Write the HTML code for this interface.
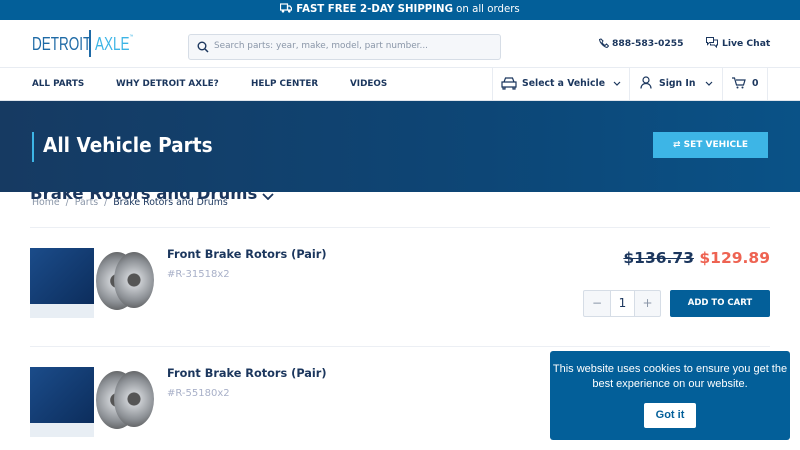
<!DOCTYPE html>
<html><head><style>
*{margin:0;padding:0;box-sizing:border-box}
body{width:800px;height:450px;overflow:hidden;font-family:"DejaVu Sans","Liberation Sans",sans-serif;background:#fff;position:relative;color:#1b365d}
.a{position:absolute}
.top{left:0;top:0;width:800px;height:20px;background:#035f99;color:#fff;font-size:10.2px;text-align:center;line-height:20px}
.nav{font-size:8.8px;font-weight:bold;color:#1b365d}
.hero{left:0;top:101px;width:800px;height:91px;background:linear-gradient(90deg,#163a62,#0d4676 60%,#0a5287)}
.btn{background:#035f99;color:#fff;font-size:8.5px;font-weight:bold;text-align:center;border-radius:2px}
</style></head><body>
<div class="a top"><svg width="12" height="10" viewBox="0 0 12 10" style="vertical-align:-1px;margin-right:4px"><rect x="0.5" y="1" width="7" height="6" fill="none" stroke="#fff" stroke-width="1.2"/><path d="M7.5 3h2.5l1.5 2v2h-4z" fill="none" stroke="#fff" stroke-width="1.2"/><circle cx="3" cy="8.3" r="1.3" fill="#fff"/><circle cx="9.3" cy="8.3" r="1.3" fill="#fff"/></svg><b>FAST FREE 2-DAY SHIPPING</b> on all orders</div>
<div class="a" style="left:32px;top:34px;font-family:'Liberation Sans',sans-serif;font-size:18px;color:#1e6aa6;transform:scaleX(0.75);transform-origin:left">DETROIT</div>
<div class="a" style="left:89px;top:30px;width:2px;height:27px;background:#1e6aa6"></div>
<div class="a" style="left:95px;top:34px;font-family:'Liberation Sans',sans-serif;font-size:18px;color:#3db5e6;transform:scaleX(0.75);transform-origin:left">AXLE<span style="font-size:5px;vertical-align:top">™</span></div>
<div class="a" style="left:188px;top:34px;width:313px;height:26px;border:1px solid #d6dde6;border-radius:3px;background:#f5f7fa"></div>
<svg class="a" style="left:197px;top:41px" width="12" height="12" viewBox="0 0 12 12"><circle cx="5" cy="5" r="3.8" fill="none" stroke="#1b365d" stroke-width="1.4"/><path d="M8 8l3 3" stroke="#1b365d" stroke-width="1.5"/></svg>
<div class="a" style="left:214px;top:41px;font-size:8.9px;color:#8a96a8">Search parts: year, make, model, part number...</div>
<svg class="a" style="left:599px;top:38px" width="10" height="10" viewBox="0 0 10 10"><path d="M2 1l2 2-1 1.5c.8 1.5 1.5 2.2 3 3L7.5 6l2 2-1.5 1.5C5 9 1 5 .5 1.5z" fill="none" stroke="#1b365d" stroke-width="1"/></svg>
<div class="a nav" style="left:612px;top:38px;font-size:9.2px">888-583-0255</div>
<svg class="a" style="left:706px;top:37px" width="12" height="11" viewBox="0 0 12 11"><path d="M.5.5h7v5h-4l-2 2v-2h-1zM8 3h3.5v5h-1v2l-2-2h-4V6.5" fill="none" stroke="#1b365d" stroke-width="1"/></svg>
<div class="a nav" style="left:722px;top:38px;font-size:9.2px">Live Chat</div>
<div class="a" style="left:0;top:67px;width:800px;height:1px;background:#e8ecf2"></div>
<div class="a" style="left:0;top:100px;width:800px;height:1px;background:#e0e5ec"></div>
<div class="a nav" style="left:32px;top:79px">ALL PARTS</div>
<div class="a nav" style="left:116px;top:79px">WHY DETROIT AXLE?</div>
<div class="a nav" style="left:251px;top:79px">HELP CENTER</div>
<div class="a nav" style="left:350px;top:79px">VIDEOS</div>
<div class="a" style="left:492px;top:68px;width:1px;height:32px;background:#e8ecf2"></div>
<div class="a" style="left:629px;top:68px;width:1px;height:32px;background:#e8ecf2"></div>
<div class="a" style="left:722px;top:68px;width:1px;height:32px;background:#e8ecf2"></div>
<div class="a" style="left:767px;top:68px;width:1px;height:32px;background:#e8ecf2"></div>
<svg class="a" style="left:501px;top:77px" width="16" height="13" viewBox="0 0 16 13"><path d="M3 5l1.5-4h7L13 5M1 5h14v5H1zM2 10v2h2v-2M12 10v2h2v-2" fill="none" stroke="#1b365d" stroke-width="1.2"/></svg>
<div class="a nav" style="left:522px;top:78px;font-size:9.3px">Select a Vehicle</div>
<svg class="a" style="left:613px;top:81px" width="8" height="5" viewBox="0 0 8 5"><path d="M1 1l3 3 3-3" fill="none" stroke="#1b365d" stroke-width="1.2"/></svg>
<svg class="a" style="left:640px;top:76px" width="12" height="13" viewBox="0 0 12 13"><circle cx="6" cy="4" r="3" fill="none" stroke="#1b365d" stroke-width="1.2"/><path d="M1 12.5c0-3 2-5 5-5s5 2 5 5" fill="none" stroke="#1b365d" stroke-width="1.2"/></svg>
<div class="a nav" style="left:659px;top:78px;font-size:9.3px">Sign In</div>
<svg class="a" style="left:705px;top:81px" width="8" height="5" viewBox="0 0 8 5"><path d="M1 1l3 3 3-3" fill="none" stroke="#1b365d" stroke-width="1.2"/></svg>
<svg class="a" style="left:732px;top:77px" width="14" height="12" viewBox="0 0 14 12"><path d="M0 1h2.5l2 7h7l1.5-5H4" fill="none" stroke="#1b365d" stroke-width="1.2"/><circle cx="5.5" cy="10.5" r="1" fill="#1b365d"/><circle cx="10.5" cy="10.5" r="1" fill="#1b365d"/></svg>
<div class="a nav" style="left:752px;top:78px;font-size:9.3px">0</div>
<div class="a" style="left:32px;top:197px;font-size:9.4px;color:#8a96a8;white-space:pre">Home  /  Parts  /  <span style="color:#1b365d">Brake Rotors and Drums</span></div>
<div class="a" style="left:30px;top:184px;font-size:16.5px;font-weight:bold;color:#1b365d">Brake Rotors and Drums</div>
<svg class="a" style="left:262px;top:193px" width="12" height="7" viewBox="0 0 12 7"><path d="M1 1l5 5 5-5" fill="none" stroke="#1b365d" stroke-width="1.8"/></svg>
<div class="a hero"></div>
<div class="a" style="left:32px;top:132px;width:2px;height:30px;background:#3db5e6"></div>
<div class="a" style="left:43px;top:134px;font-size:18.5px;font-weight:bold;color:#fff;transform:scaleY(1.12);transform-origin:top">All Vehicle Parts</div>
<div class="a btn" style="left:653px;top:132px;width:115px;height:26px;line-height:26px;background:#3db5e6;font-size:9px;border-radius:0">⇄ SET VEHICLE</div>
<div class="a" style="left:30px;top:227px;width:740px;height:1px;background:#eceff4"></div>
<div class="a" style="left:30px;top:346px;width:740px;height:1px;background:#eceff4"></div>
<div class="a" style="left:30px;top:248px;width:64px;height:70px;background:linear-gradient(135deg,#1b4c8a,#0c2d5c);border-bottom:14px solid #e8eef4"></div>
<div class="a" style="left:96px;top:252px;width:42px;height:58px;border-radius:50%;background:radial-gradient(circle,#555 0 18%,#c9ccd0 20%,#8b8f94 60%,#444 100%)"></div>
<div class="a" style="left:114px;top:252px;width:40px;height:56px;border-radius:50%;background:radial-gradient(circle,#555 0 18%,#c9ccd0 20%,#8b8f94 60%,#444 100%)"></div>
<div class="a" style="left:30px;top:367px;width:64px;height:70px;background:linear-gradient(135deg,#1b4c8a,#0c2d5c);border-bottom:14px solid #e8eef4"></div>
<div class="a" style="left:96px;top:371px;width:42px;height:58px;border-radius:50%;background:radial-gradient(circle,#555 0 18%,#c9ccd0 20%,#8b8f94 60%,#444 100%)"></div>
<div class="a" style="left:114px;top:371px;width:40px;height:56px;border-radius:50%;background:radial-gradient(circle,#555 0 18%,#c9ccd0 20%,#8b8f94 60%,#444 100%)"></div>
<div class="a" style="left:167px;top:248px;font-size:11.3px;font-weight:bold">Front Brake Rotors (Pair)</div>
<div class="a" style="left:167px;top:269px;font-size:10px;color:#a8b0c8">#R-31518x2</div>
<div class="a" style="left:167px;top:367px;font-size:11.3px;font-weight:bold">Front Brake Rotors (Pair)</div>
<div class="a" style="left:167px;top:388px;font-size:10px;color:#a8b0c8">#R-55180x2</div>
<div class="a" style="right:30px;top:249px;font-size:15.5px;font-weight:bold;white-space:nowrap"><s>$136.73</s> <span style="color:#ee6352">$129.89</span></div>
<div class="a" style="left:583px;top:290px;width:78px;height:27px;border:1px solid #d6dde6;border-radius:2px;background:#f5f7fa;display:flex;font-size:12px;color:#8a96a8;text-align:center;line-height:25px"><div style="width:26px">−</div><div style="width:25px;background:#fff;color:#1b365d;border-left:1px solid #d6dde6;border-right:1px solid #d6dde6">1</div><div style="width:25px">+</div></div>
<div class="a btn" style="left:670px;top:290px;width:100px;height:27px;line-height:27px">ADD TO CART</div>
<div class="a" style="left:550px;top:351px;width:240px;height:89px;background:#035f99;border-radius:3px;font-family:'Liberation Sans',Arial,sans-serif;color:#fff;font-size:11px;text-align:center;line-height:15px;padding-top:11px;white-space:nowrap">This website uses cookies to ensure you get the<br>best experience on our website.
<div style="margin:11px auto 0;width:52px;height:25px;background:#fff;color:#035f99;font-weight:bold;line-height:25px;border-radius:2px;font-size:11px">Got it</div></div>
</body></html>
